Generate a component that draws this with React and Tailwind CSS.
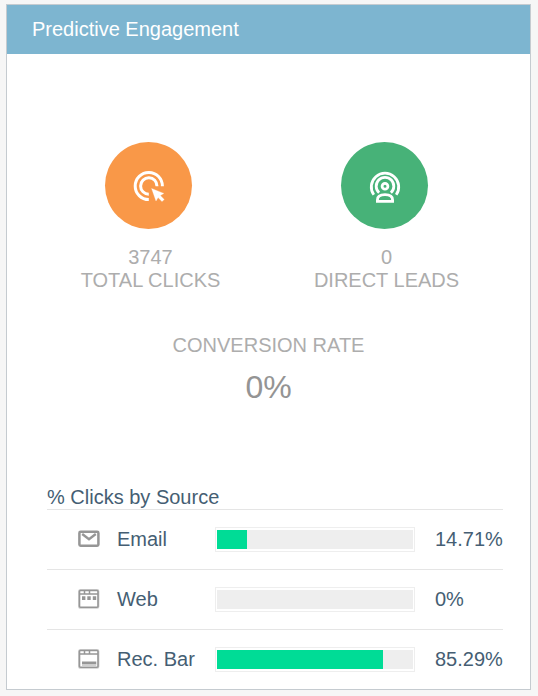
const ClickIcon = () => (
  <svg width="87" height="87" viewBox="105 142 87 87" fill="none" stroke="#fff" strokeWidth="3">
    <path d="M162.4 186.2A13.6 13.6 0 1 0 148.8 199.6" />
    <path d="M157 186.2A8.2 8.2 0 1 0 148.8 194.2" />
    <path d="M151.6 188.5L163.8 193.4L160.3 195.6L164.2 199.4L162 201.6L158.1 197.6L156 201Z" fill="#fff" strokeWidth="0.3" />
  </svg>
);

const LeadIcon = () => (
  <svg width="87" height="87" viewBox="341 142 87 87" fill="none" stroke="#fff" strokeWidth="2.8">
    <circle cx="385" cy="186.3" r="2.9" strokeWidth="2.8" />
    <path d="M373.8 194.8A13.7 13.7 0 1 1 396.2 194.8" />
    <path d="M379.1 192.7A8.8 8.8 0 1 1 390.9 192.7" />
    <path d="M377.4 201.3V200C377.4 196.5 380.2 194.7 385 194.7S392.6 196.5 392.6 200V201.3Z" />
  </svg>
);

const MailIcon = () => (
  <svg width="22" height="20" viewBox="0 0 22 20" fill="none" stroke="#969696">
    <rect x="1.4" y="2.7" width="19" height="14" rx="1.2" strokeWidth="2.5" />
    <path d="M4.2 5L11 10.2L17.8 5" strokeWidth="2.4" />
  </svg>
);

const WindowIcon = ({ children }) => (
  <svg width="22" height="20" viewBox="0 0 22 20" fill="none" stroke="#969696">
    <rect x="0.7" y="0.7" width="20" height="18.4" rx="1.5" stroke="#cfcfcf" strokeWidth="1.4" />
    <rect x="1.5" y="1.5" width="18.5" height="16.8" rx="1" strokeWidth="1.6" />
    <path d="M2 5H20M6.5 1.5V5M11.5 1.5V5" strokeWidth="1.5" />
    {children}
  </svg>
);

const WebIcon = () => (
  <WindowIcon>
    <path d="M4 9.2H7.4M9.3 9.2H12.7M14.8 9.2H18.2" strokeWidth="3.8" />
  </WindowIcon>
);

const BarIcon = () => (
  <WindowIcon>
    <path d="M4 14H18.3" strokeWidth="3" />
    <path d="M4 16.3H18.3" stroke="#cfcfcf" strokeWidth="1.8" />
  </WindowIcon>
);

const Stat = ({ icon, color, value, label, className }) => (
  <div className={`flex flex-col items-center ${className}`}>
    <div className={`size-[87px] rounded-full ${color}`}>{icon}</div>
    <div className="mt-[17px] whitespace-nowrap pl-1 text-center text-[20px] leading-[23px] text-[#adadad]">
      <div>{value}</div>
      <div>{label}</div>
    </div>
  </div>
);

const sources = [
  { name: "Email", value: "14.71%", fill: 30, Icon: MailIcon },
  { name: "Web", value: "0%", fill: 0, Icon: WebIcon },
  { name: "Rec. Bar", value: "85.29%", fill: 166, Icon: BarIcon },
];

export default function App() {
  return (
    <div className="h-[696px] w-[538px] bg-[#f6f6f6] pl-[6px] pt-[4px] font-['Liberation_Sans',Arial,sans-serif]">
      <section className="flex h-[686px] w-[525px] flex-col border border-[#c5cbd0] bg-white">
        <h1 className="h-[49px] bg-[#7db5d0] pl-[25px] text-[20px] leading-[48px] text-white">
          Predictive Engagement
        </h1>
        <div className="flex pt-[88px]">
          <Stat className="ml-[61px] w-[161px]" icon={<ClickIcon />} color="bg-[#f99848]" value="3747" label="TOTAL CLICKS" />
          <Stat className="ml-[75px] w-[161px]" icon={<LeadIcon />} color="bg-[#47b278]" value="0" label="DIRECT LEADS" />
        </div>
        <div className="mt-[42px] text-center text-[20px] leading-[23px] text-[#adadad]">
          CONVERSION RATE
        </div>
        <div className="mt-[12px] text-center text-[32px] leading-[37px] text-[#949494]">0%</div>
        <div className="ml-[40px] mt-[80px] w-[456px] text-[20px] text-[#455e73]">
          <h2 className="h-[23px] leading-[23px]">% Clicks by Source</h2>
          {sources.map(({ name, value, fill, Icon }) => (
            <div key={name} className="flex h-[60px] items-center border-t border-[#e5e5e5]">
              <div className="ml-[31px] w-[39px] pb-[2px]"><Icon /></div>
              <div className="w-[98px] whitespace-nowrap pb-[2px]">{name}</div>
              <div className="h-[25px] w-[200px] border border-[#eeeeee] px-px py-[2px]">
                <div className="h-full bg-[#eeeeee]">
                  <div className="h-full bg-[#00dc96]" style={{ width: fill }} />
                </div>
              </div>
              <div className="ml-[20px] pb-[2px]">{value}</div>
            </div>
          ))}
        </div>
      </section>
    </div>
  );
}
